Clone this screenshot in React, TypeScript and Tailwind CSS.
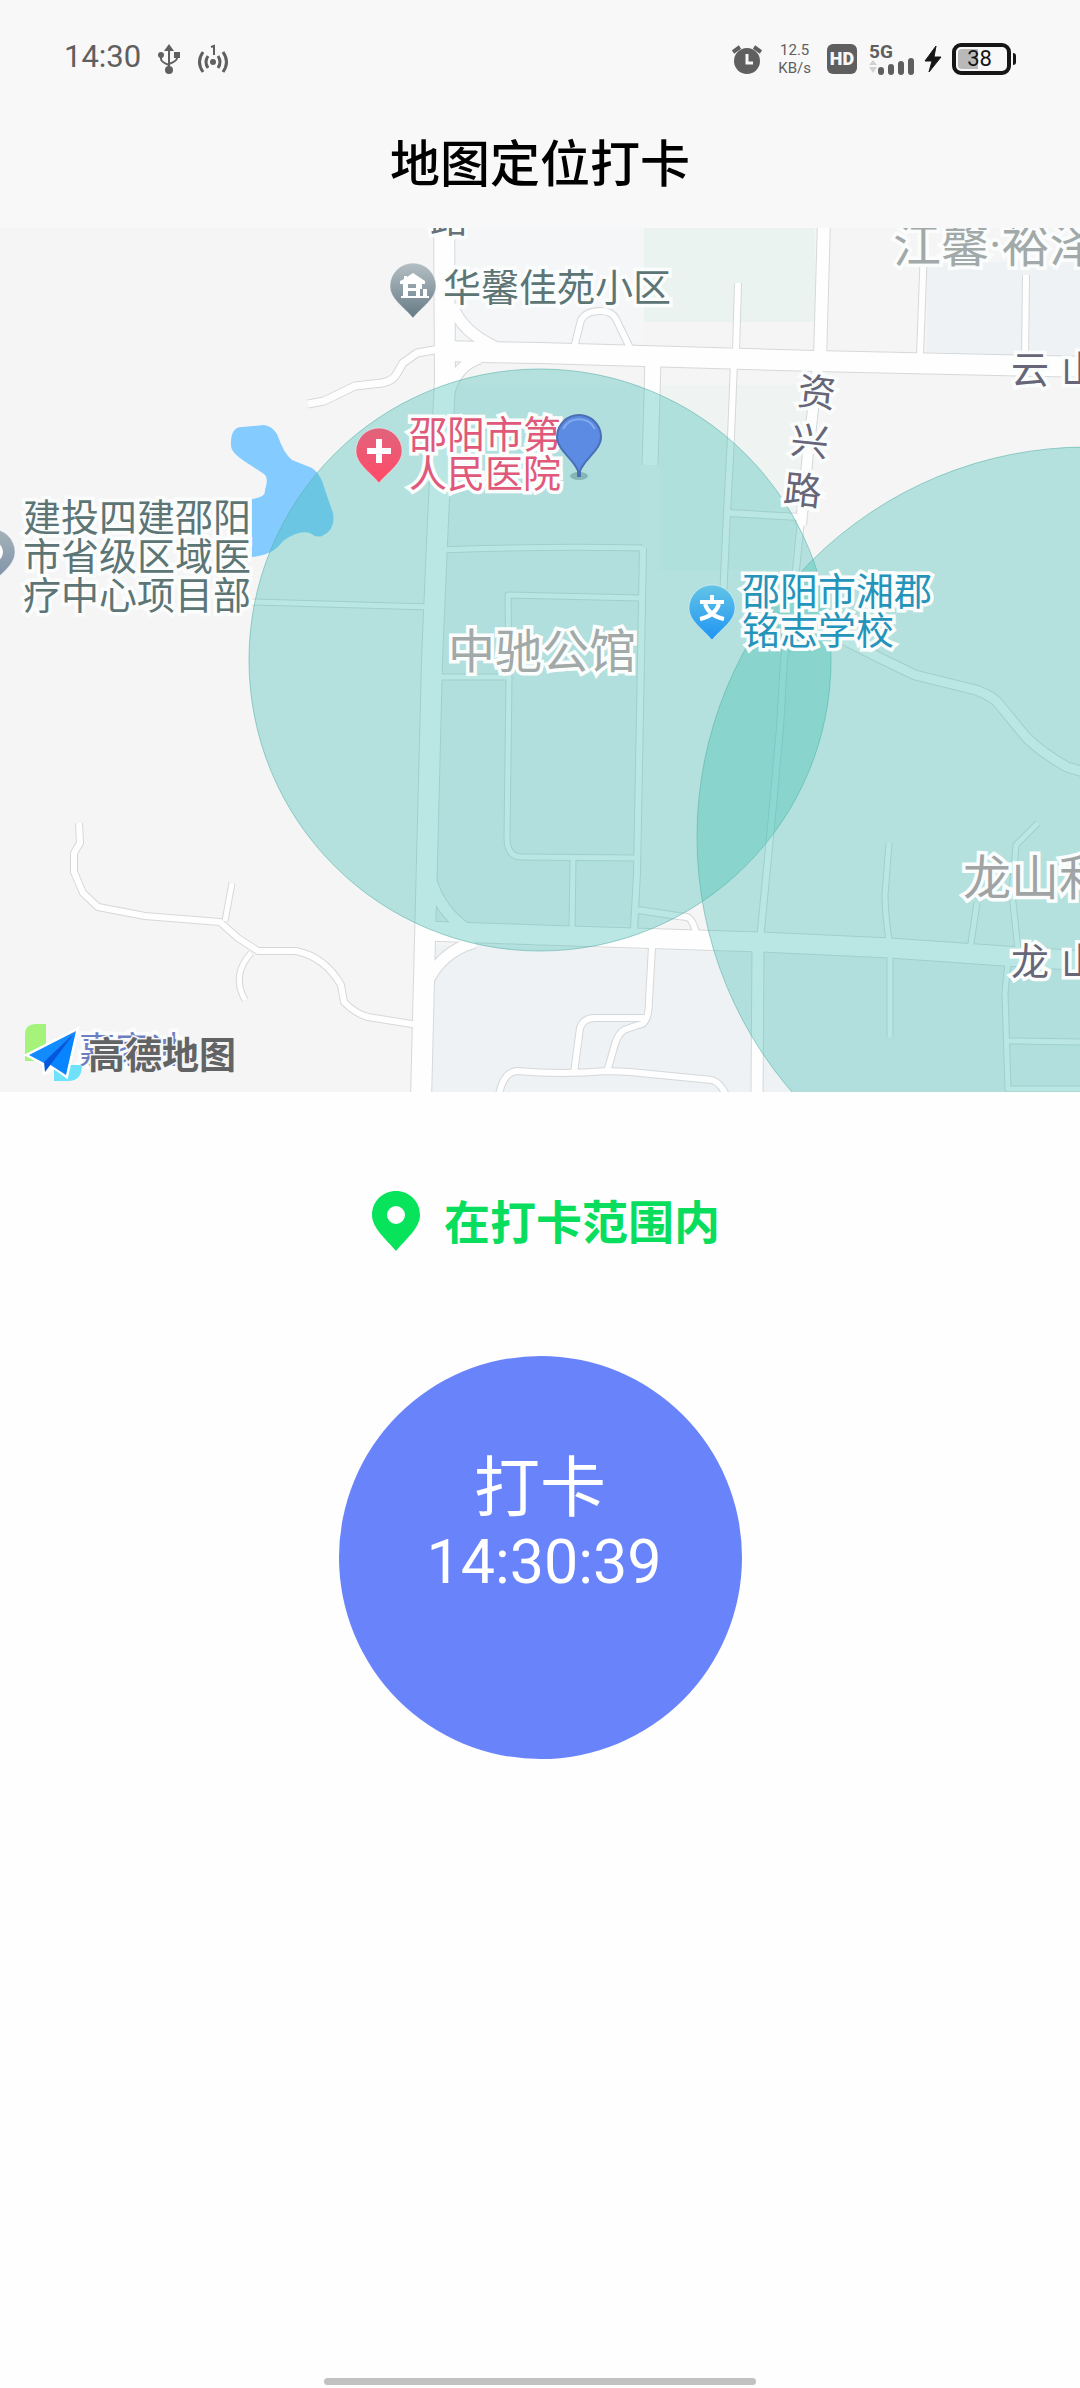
import type { ReactNode } from 'react';

const PIN_SHAPE = 'M24 1a23 23 0 0 1 23 23c0 13-14 21-23 32C15 45 1 37 1 24A23 23 0 0 1 24 1z';

// [path, width], in map canvas units
const ROADS: [string, number][] = [
    ['M444 200L445 380L444 400L438 520L432 660L427 860L421 1100', 20],
    ['M444 351L480 352L540 353L815 361L1090 367', 20],
    ['M452 305Q462 332 495 347', 11],
    ['M448 395Q456 365 480 358', 11],
    ['M308 404L324 401L355 386L382 383Q392 381 396 375L403 363L417 353L440 349', 7],
    ['M574 348L581 320Q586 311 600 311Q612 311 616 319L631 350', 6],
    ['M738 283L736 352', 6],
    ['M824 220L820 360', 12],
    ['M818 365L808 453L801 525', 10],
    ['M801 520L796 570L784 660L780 728L771 827L760 940', 6],
    ['M925 220L920 356', 6],
    ['M1026 275L1025 360', 6],
    ['M653 360L650 465', 15],
    ['M734 362L731 437L727 513L723 600', 6],
    ['M728 513L800 517', 6],
    ['M440 550Q540 546 643 548', 5],
    ['M250 602L430 607', 5],
    ['M641 598L508 595L509 677L507 838Q507 857 522 857L635 858', 5],
    ['M436 677L509 677', 5],
    ['M643 548L641 660L637 873L634 930', 6],
    ['M573 860L572 930', 5],
    ['M638 910L678 916L687 917Q693 919 697 936', 6],
    ['M427 931L540 935L760 942L890 948L1005 956L1090 961', 19],
    ['M430 878Q440 912 468 930', 11],
    ['M426 985Q440 952 475 942', 11],
    ['M758 945L757 1100', 11],
    ['M890 950L890 1037', 5],
    ['M889 843L885 895Q885 915 890 948', 5],
    ['M1038 823L1016 845L1012 893L1018 950', 5],
    ['M977 903L970 950', 5],
    ['M1008 962L1005 993L1008 1089L1090 1089', 5],
    ['M1008 1041L1090 1042', 5],
    ['M816 625L850 643L884 660L915 675L976 690Q992 696 998 703L1026 737Q1042 753 1067 767L1090 774', 9],
    ['M652 947L649 1000Q649 1025 638 1025L624 1030Q618 1034 615 1044L607 1072', 6],
    ['M644 1018L595 1018Q583 1018 580 1028L574 1073', 6],
    ['M498 1100Q502 1072 517 1071Q560 1075 607 1071L630 1072L712 1080Q722 1083 728 1100', 6],
    ['M79 823L80 843L74 853L74 872L83 893L98 907L145 916L220 922L238 938L258 951L296 951Q325 957 341 985L344 1002Q356 1014 368 1017L418 1025', 6],
    ['M232 883L225 921', 5],
    ['M251 953Q231 975 245 1000', 5],
];

function MapCanvas() {
    return (
        <svg
            viewBox="0 228 1080 864"
            preserveAspectRatio="xMinYMin slice"
            className="block h-full w-full"
            aria-hidden="true"
        >
            <rect y="228" width="1080" height="864" fill="#f5f5f6" />
            <path d="M456 228H644V343L456 340z" fill="#f5f6f8" />
            <path d="M644 228H815V322H644z" fill="#eaf3ef" />
            <path d="M660 385H812L790 570H660z" fill="#eff3f1" />
            <path d="M927 262H1080V357L927 352z" fill="#eff2f5" />
            <path d="M450 385H640V925H432z" fill="#eef2f5" />
            <path d="M432 945L1080 960V1092H430z" fill="#eef2f5" />
            <path
                d="M231 446Q230 427 242 427L264 425Q272 426 277 434Q284 454 292 460L312 468Q321 474 325 490L333 513Q336 530 322 536Q316 538 310 533Q298 530 283 541C277 549 270 555 252 557V499Q266 497 265 490Q269 478 264 474C250 464 232 456 231 446z"
                fill="#84cbff"
            />
            <g fill="none" stroke="#d5d8da" strokeLinejoin="round">
                {ROADS.map(([d, w]) => (
                    <path key={d} d={d} strokeWidth={w + 2} />
                ))}
            </g>
            <g fill="none" stroke="#fefefe" strokeLinejoin="round">
                {ROADS.map(([d, w]) => (
                    <path key={d} d={d} strokeWidth={w} />
                ))}
            </g>
            <g fill="#3bbeb2" fillOpacity="0.35" stroke="#5cb3a8" strokeOpacity="0.6">
                <circle cx="540" cy="660" r="291" />
                <circle cx="1087" cy="837" r="390" />
            </g>
        </svg>
    );
}

function Label({ className, children }: { className: string; children: ReactNode }) {
    return (
        <div
            className={`absolute whitespace-nowrap [-webkit-text-stroke:7px_#fbfdfd] [paint-order:stroke_fill] [stroke-linejoin:round] ${className}`}
        >
            {children}
        </div>
    );
}

function Pin({
    id,
    from,
    to,
    className,
    children,
}: {
    id: string;
    from: string;
    to: string;
    className: string;
    children?: ReactNode;
}) {
    return (
        <svg viewBox="0 0 48 58" className={`absolute h-[58px] w-12 ${className}`} aria-hidden="true">
            <defs>
                <linearGradient id={id} x1="0" y1="0" x2="0" y2="1">
                    <stop offset="0" stopColor={from} />
                    <stop offset="1" stopColor={to} />
                </linearGradient>
            </defs>
            <path d={PIN_SHAPE} fill={`url(#${id})`} stroke="#fff" strokeOpacity="0.4" />
            {children}
        </svg>
    );
}

function MapView() {
    return (
        <section aria-label="地图" className="relative h-[864px] overflow-hidden bg-[#f5f5f6]">
            <MapCanvas />

            <Label className="top-[-31px] left-[430px] text-[38px] leading-[38px] text-[#66717a]">路</Label>
            <Label className="top-[38px] left-[443px] text-[38px] leading-[38px] text-[#5d7575]">华馨佳苑小区</Label>
            <Label className="top-[-11px] left-[893px] text-[48px] leading-[48px] text-[#a2a9a9]">
                江馨<span className="font-[Roboto,sans-serif]">·</span>裕泽
            </Label>
            <Label className="top-[120px] left-[1011px] flex gap-3 text-[38px] leading-[38px] text-[#666678]">
                <span>云</span>
                <span>山</span>
            </Label>
            <Label className="top-[143px] left-[798px] rotate-6 text-[38px] leading-[38px] text-[#666678]">资</Label>
            <Label className="top-[192px] left-[791px] rotate-6 text-[38px] leading-[38px] text-[#666678]">兴</Label>
            <Label className="top-[241px] left-[784px] rotate-6 text-[38px] leading-[38px] text-[#666678]">路</Label>
            <Label className="top-[184px] left-[409px] text-[38px] leading-[39px] text-[#e0587a]">
                邵阳市第
                <br />
                人民医院
            </Label>
            <Label className="top-[267px] left-[23px] text-[38px] leading-[39px] text-[#5d7575]">
                建投四建邵阳
                <br />
                市省级区域医
                <br />
                疗中心项目部
            </Label>
            <Label className="top-[341px] left-[742px] text-[38px] leading-[39px] text-[#2494bb]">
                邵阳市湘郡
                <br />
                铭志学校
            </Label>
            <Label className="top-[396px] left-[448px] text-[47px] leading-[48px] text-[#a2a9a9]">中驰公馆</Label>
            <Label className="top-[622px] left-[963px] text-[48px] leading-[48px] text-[#a0a4a4]">龙山利</Label>
            <Label className="top-[712px] left-[1011px] flex gap-3 text-[38px] leading-[38px] text-[#666678]">
                <span>龙</span>
                <span>山</span>
            </Label>
            <Label className="top-[800px] left-[79px] text-[36px] leading-[38px] text-[#6d7fc0]">嘉家冲</Label>

            <Pin id="estate" from="#b4bfc4" to="#657a86" className="top-[34px] left-[389px]">
                <path
                    d="M24 11L36 19V22H33V27H38V34H40V36H12V34H14V22H11V19L15 17V14H18V15z M19 22V26H27V22z M19 29V34H27V29z M31 27V34H34V27z"
                    fill="#fff"
                    fillRule="evenodd"
                />
            </Pin>
            <Pin id="site" from="#a5b2ba" to="#7d8fa8" className="top-[300px] -left-8">
                <circle cx="24" cy="24" r="11" fill="#fff" />
            </Pin>
            <Pin id="hospital" from="#e0647c" to="#ff4a68" className="top-[199px] left-[355px]">
                <path d="M21 12H27V21H36V27H27V36H21V27H12V21H21z" fill="#fff" />
            </Pin>
            <Pin id="school" from="#62c4e6" to="#2094f2" className="top-[356px] left-[688px]">
                <path
                    d="M24 11V16M12 18H36M17 20Q21 32 36 35M31 20Q27 32 12 35"
                    fill="none"
                    stroke="#fff"
                    strokeWidth="4"
                />
            </Pin>

            {/* current position */}
            <svg viewBox="0 0 48 68" className="absolute top-[185px] left-[555px] h-[68px] w-12" aria-hidden="true">
                <ellipse cx="24" cy="63" rx="9" ry="4" fill="#6a9a9c" fillOpacity="0.6" />
                <path
                    d="M24 2a22 22 0 0 1 22 22c0 13-17 22-21 34v5h-2v-5C19 46 2 37 2 24A22 22 0 0 1 24 2z"
                    fill="#5b8be2"
                    stroke="#4a6fb4"
                    strokeWidth="2"
                />
                <path d="M8 16a18 18 0 0 1 32 0" fill="none" stroke="#84aaee" strokeWidth="2" />
            </svg>

            <div className="absolute bottom-[9px] left-6 flex items-center gap-1">
                <svg viewBox="0 0 60 60" className="h-[60px] w-[60px]" aria-hidden="true">
                    <path d="M12 1H22V38H1V12Q1 1 12 1z" fill="#a6f37c" />
                    <path d="M30 42H58Q58 58 44 58H30z" fill="#6fe2fb" />
                    <path d="M52 8L5 32L20 40L21 49L31 44L42 52z" fill="#fff" stroke="#fff" strokeWidth="5" />
                    <path d="M52 8L5 32L20 40z" fill="#128bff" />
                    <path d="M52 8L25 41L42 52z" fill="#0784ff" />
                    <path d="M52 8L20 39L21 49L27 41z" fill="#0557dc" />
                </svg>
                <span className="text-[37px] leading-[60px] font-bold text-[#626365] [-webkit-text-stroke:3px_#f5f5f6] [paint-order:stroke_fill]">
                    高德地图
                </span>
            </div>
        </section>
    );
}

function StatusBar() {
    return (
        <div className="flex h-[118px] items-center justify-between px-16 font-[Roboto,sans-serif] text-[#5f5f5f]">
            <div className="flex items-center">
                <span className="pb-1 text-[31px] leading-8">14:30</span>
                <svg viewBox="0 0 24 32" className="ml-4 h-8 w-6" fill="none" stroke="currentColor" strokeWidth="2" aria-hidden="true">
                    <path d="M12 6V26M4 12V16Q4 19 12 22M20 12V15Q20 18 12 21" />
                    <path d="M12 1L17 8H7z" fill="currentColor" stroke="none" />
                    <circle cx="4" cy="12" r="3" fill="currentColor" stroke="none" />
                    <path d="M17 9H23V15H17z" fill="currentColor" stroke="none" />
                    <circle cx="12" cy="27" r="4" fill="currentColor" stroke="none" />
                </svg>
                <svg viewBox="0 0 32 32" className="ml-4 h-8 w-8" fill="none" stroke="currentColor" strokeWidth="3" aria-hidden="true">
                    <path d="M6 9Q-1 19 6 29M26 9Q33 19 26 29" />
                    <path d="M11 13Q7 19 11 25M21 13Q25 19 21 25" />
                    <path d="M14 4L17 3V12" strokeWidth="2" />
                    <circle cx="16" cy="19" r="3" fill="currentColor" stroke="none" />
                </svg>
            </div>
            <div className="flex items-center">
                <svg viewBox="0 0 30 32" className="h-8 w-[30px]" aria-hidden="true">
                    <circle cx="15" cy="18" r="13" fill="currentColor" />
                    <path d="M1 9L8 4M29 9L22 4" stroke="currentColor" strokeWidth="4" />
                    <path d="M15 11V20H21" fill="none" stroke="#f8f8f8" strokeWidth="3" />
                </svg>
                <span className="ml-4 flex flex-col text-center text-[15px] leading-[18px]">
                    <span>12.5</span>
                    <span>KB/s</span>
                </span>
                <span className="ml-4 flex h-[30px] w-[30px] items-center justify-center rounded-md bg-[#5f5f5f] text-[18px] leading-5 font-black text-[#f8f8f8]">
                    HD
                </span>
                <span className="relative ml-3 flex h-8 w-[45px] items-end">
                    <span className="absolute top-0 left-0 text-[19px] leading-[17px] font-bold">5G</span>
                    <svg viewBox="0 0 45 18" className="h-[18px] w-[45px]" aria-hidden="true">
                        <path d="M0 8L4 3L8 8zM0 10H8L4 16z" fill="#d2d2d2" />
                        <rect x="9" y="10" width="6" height="8" rx="3" fill="currentColor" />
                        <rect x="19" y="7" width="6" height="11" rx="3" fill="currentColor" />
                        <rect x="29" y="4" width="6" height="14" rx="3" fill="currentColor" />
                        <rect x="39" y="1" width="6" height="17" rx="3" fill="currentColor" />
                    </svg>
                </span>
                <svg viewBox="0 0 18 28" className="ml-2.5 h-7 w-[18px]" aria-hidden="true">
                    <path d="M12 1L1 16H8L5 27L17 12H10z" fill="#161616" stroke="#161616" strokeLinejoin="round" />
                </svg>
                <span className="relative ml-2.5 flex h-8 w-[59px] items-center justify-center rounded-[9px] border-4 border-[#161616] pr-1 text-[22px] leading-6 text-[#161616]">
                    <span className="absolute top-0.5 bottom-0.5 left-0.5 w-5 rounded-l-sm bg-[#b9b9b9]" />
                    <span className="relative">38</span>
                </span>
                <span className="ml-0.5 h-3 w-[3px] rounded-r-sm bg-[#161616]" />
            </div>
        </div>
    );
}

export default function App() {
    return (
        <div className="flex min-h-screen flex-col bg-[#fefefe] font-['Noto_Sans_CJK_SC',sans-serif]">
            <header className="bg-[#f8f8f8] pb-[26px]">
                <StatusBar />
                <h1 className="text-center text-[50px] leading-[84px] font-medium text-black">地图定位打卡</h1>
            </header>
            <MapView />
            <main className="flex flex-col items-center pt-24">
                <p className="flex items-center gap-6 pl-3 text-[46px] leading-[62px] font-bold text-[#09dd5d]">
                    <svg viewBox="0 0 48 62" className="h-[62px] w-12" aria-hidden="true">
                        <path
                            d="M24 1C37 1 48 11 48 25C48 38 34 49 24 61C14 49 0 38 0 25C0 11 11 1 24 1zM24 16a9 9 0 1 0 0 18a9 9 0 1 0 0-18z"
                            fill="#07e45c"
                            fillRule="evenodd"
                        />
                    </svg>
                    <span className="pb-1">在打卡范围内</span>
                </p>
                <button
                    type="button"
                    className="mt-[102px] flex h-[403px] w-[403px] flex-col items-center rounded-full bg-[#6983fa] pt-[88px] text-white"
                >
                    <span className="text-[66px] leading-[76px]">打卡</span>
                    <span className="pl-2 font-[Roboto,sans-serif] text-[61px] leading-[84px]">14:30:39</span>
                </button>
            </main>
            <div className="mx-auto mt-auto mb-[3px] h-[7px] w-[40%] rounded-full bg-[#c1c1c1]" />
        </div>
    );
}
